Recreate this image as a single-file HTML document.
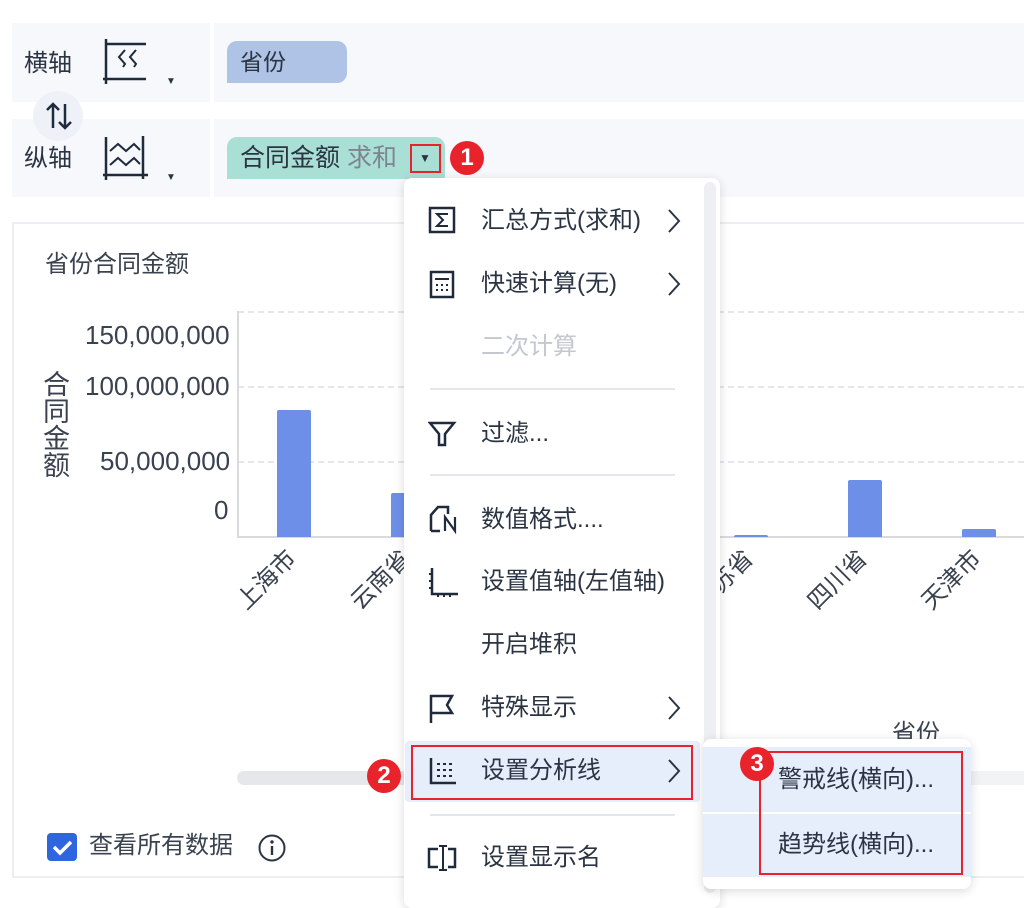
<!DOCTYPE html>
<html><head><meta charset="utf-8"><style>
*{margin:0;padding:0;box-sizing:border-box}
body{width:1024px;height:893px;overflow:hidden;background:#fff;font-family:"Liberation Sans","Noto Sans CJK SC",sans-serif;color:#2b3443;position:relative}
.abs{position:absolute}
.t{position:absolute;white-space:nowrap;line-height:1}
.mi{position:absolute;left:481px;font-size:24px;white-space:nowrap;line-height:1;color:#2b3443}
.arr{position:absolute;left:667px}
.sep{position:absolute;left:430px;width:245px;height:2px;background:#e3e6ec}
.badge{position:absolute;width:34px;height:34px;border-radius:50%;background:#e8232b;color:#fff;font-size:24px;font-weight:bold;text-align:center;line-height:34px}
.dash{position:absolute;left:238px;width:786px;border-top:2px dashed #e6e7ea}
.bar{position:absolute;background:#6d8fe8;border-radius:2px 2px 0 0}
.xl{position:absolute;font-size:24px;color:#3a4250;transform-origin:right center;transform:rotate(-45deg);white-space:nowrap;text-align:right;width:100px}
</style></head><body>
<div class="abs" style="left:12px;top:23px;width:1012px;height:79px;background:#f6f8fc"></div>
<div class="abs" style="left:12px;top:119px;width:1012px;height:78px;background:#f6f8fc"></div>
<div class="abs" style="left:210px;top:23px;width:4px;height:174px;background:#fff"></div>
<div class="t" style="left:24px;top:52px;font-size:24px">横轴</div>
<div class="t" style="left:24px;top:147px;font-size:24px">纵轴</div>
<svg class="abs" style="left:100px;top:38px" width="50" height="48" viewBox="0 0 50 48" fill="none" stroke="#1f2a3d" stroke-width="2.5">
<path d="M6 1V46M3 41H46M6 6H46"/><path d="M25 12L19 19L25 26L23 29M36 12L30 19L36 26L34 29" stroke-width="2"/></svg>
<svg class="abs" style="left:100px;top:134px" width="50" height="48" viewBox="0 0 50 48" fill="none" stroke="#1f2a3d" stroke-width="2.5">
<path d="M6 3V46M3 41H48M43 2V45"/><path d="M10 17L18 10L26 17L34 10L40 16M10 31L18 24L26 31L34 24L40 30" stroke-width="2"/></svg>
<div class="t" style="left:166px;top:77px;font-size:10px">▼</div>
<div class="t" style="left:166px;top:173px;font-size:10px">▼</div>
<div class="abs" style="left:33px;top:91px;width:50px;height:50px;border-radius:50%;background:#eef1f8"></div>
<svg class="abs" style="left:44px;top:101px" width="30" height="30" fill="none" stroke="#1f2a3d" stroke-width="2.5"><path d="M9 27V3M3 9L9 3L15 9M21 3V27M15 21L21 27L27 21"/></svg>
<div class="abs" style="left:227px;top:41px;width:120px;height:42px;background:#aec3e6;border-radius:10px 10px 10px 0"></div>
<div class="t" style="left:240px;top:51px;font-size:23px">省份</div>
<div class="abs" style="left:227px;top:137px;width:218px;height:42px;background:#a9dfd5;border-radius:10px 10px 0 0"></div>
<div class="t" style="left:240px;top:146px;font-size:25px">合同金额 <span style="color:#7c8591">求和</span></div>
<div class="abs" style="left:410px;top:144px;width:31px;height:29px;border:2px solid #e8232b"></div>
<div class="t" style="left:419px;top:152px;font-size:12px">▼</div>
<div class="badge" style="left:450px;top:141px">1</div>
<div class="abs" style="left:12px;top:222px;width:1012px;height:656px;border:2px solid #eceef3;border-right:none"></div>
<div class="t" style="left:45px;top:253px;font-size:24px;color:#3a4250">省份合同金额</div>
<div class="t" style="left:43px;top:372px;font-size:27px;width:30px;line-height:27px;white-space:normal;color:#3a4250">合同金额</div>
<div class="t" style="left:85px;top:322px;font-size:26px;color:#3a4250">150,000,000</div>
<div class="t" style="left:85px;top:373px;font-size:26px;color:#3a4250">100,000,000</div>
<div class="t" style="left:100px;top:448px;font-size:26px;color:#3a4250">50,000,000</div>
<div class="t" style="left:214px;top:497px;font-size:26px;color:#3a4250">0</div>
<div class="dash" style="top:311px"></div>
<div class="dash" style="top:386px"></div>
<div class="dash" style="top:461px"></div>
<div class="abs" style="left:237px;top:311px;width:2px;height:227px;background:#d8dade"></div>
<div class="abs" style="left:237px;top:536px;width:787px;height:2px;background:#d8dade"></div>
<div class="bar" style="left:277px;top:410px;width:34px;height:127px"></div>
<div class="bar" style="left:391px;top:493px;width:34px;height:44px"></div>
<div class="bar" style="left:734px;top:535px;width:34px;height:2px"></div>
<div class="bar" style="left:848px;top:480px;width:34px;height:57px"></div>
<div class="bar" style="left:962px;top:529px;width:34px;height:8px"></div>
<div class="xl" style="left:190px;top:535px">上海市</div>
<div class="xl" style="left:304px;top:535px">云南省</div>
<div class="xl" style="left:647px;top:535px">江苏省</div>
<div class="xl" style="left:761px;top:535px">四川省</div>
<div class="xl" style="left:875px;top:535px">天津市</div>
<div class="t" style="left:892px;top:722px;font-size:24px;color:#3a4250">省份</div>
<div class="abs" style="left:237px;top:771px;width:200px;height:14px;border-radius:7px;background:#e5e7eb"></div>
<div class="abs" style="left:720px;top:771px;width:304px;height:14px;background:#f2f3f5"></div>
<div class="abs" style="left:47px;top:833px;width:30px;height:28px;border-radius:4px;background:#2f66e0"></div>
<svg class="abs" style="left:47px;top:833px" width="30" height="28"><path d="M7 14L13 20L24 9" stroke="#fff" stroke-width="3.5" fill="none"/></svg>
<div class="t" style="left:89px;top:834px;font-size:24px;color:#3a4250">查看所有数据</div>
<svg class="abs" style="left:257px;top:833px" width="30" height="30"><circle cx="15" cy="15" r="12.5" stroke="#2b3443" stroke-width="2" fill="none"/><circle cx="15" cy="9" r="1.7" fill="#2b3443"/><path d="M15 13V22" stroke="#2b3443" stroke-width="2.4"/></svg>
<div class="abs" style="left:404px;top:178px;width:316px;height:730px;background:#fff;border-radius:8px;box-shadow:0 2px 10px rgba(0,0,0,.15)"></div>
<div class="abs" style="left:704px;top:182px;width:12px;height:711px;background:#eeeff3;border-radius:6px"></div>
<svg class="abs" style="left:428px;top:205px" width="30" height="30" fill="none" stroke="#1f2a3d" stroke-width="2.5"><rect x="2" y="3" width="24" height="24"/><path d="M20 9H9L15 15L9 21H20" stroke-width="2"/></svg>
<div class="mi" style="top:209px">汇总方式(求和)</div>
<svg class="arr" style="top:208px" width="14" height="26"><path d="M2 2L12 13L2 24" stroke="#2b3443" stroke-width="2" fill="none"/></svg>
<svg class="abs" style="left:428px;top:270px" width="30" height="30" fill="none" stroke="#1f2a3d" stroke-width="2.5"><rect x="3" y="2" width="22" height="25"/><path d="M7 9H21" stroke-width="2"/><path d="M8 15h2M13 15h2M18 15h2M8 20h2M13 20h2M18 20h2" stroke-width="2"/></svg>
<div class="mi" style="top:272px">快速计算(无)</div>
<svg class="arr" style="top:271px" width="14" height="26"><path d="M2 2L12 13L2 24" stroke="#2b3443" stroke-width="2" fill="none"/></svg>
<div class="mi" style="top:335px;color:#c3c7cf">二次计算</div>
<div class="sep" style="top:388px"></div>
<svg class="abs" style="left:428px;top:419px" width="30" height="30" fill="none" stroke="#1f2a3d" stroke-width="2.5"><path d="M2 4H26L17 15V26H11V15Z"/></svg>
<div class="mi" style="top:422px">过滤...</div>
<div class="sep" style="top:474px"></div>
<svg class="abs" style="left:428px;top:504px" width="32" height="30" fill="none" stroke="#1f2a3d" stroke-width="2.5"><path d="M3 27V11L10 3H20V10M3 27H12"/><path d="M17 27V13L27 27V13" stroke-width="2.2"/></svg>
<div class="mi" style="top:508px">数值格式....</div>
<svg class="abs" style="left:428px;top:566px" width="32" height="32" fill="none" stroke="#1f2a3d" stroke-width="2.5"><path d="M4 2V28H30"/><path d="M1 8H4M1 15H4M1 22H4M10 28v3M16 28v3M22 28v3" stroke-width="2"/></svg>
<div class="mi" style="top:570px">设置值轴(左值轴)</div>
<div class="mi" style="top:633px">开启堆积</div>
<svg class="abs" style="left:428px;top:693px" width="30" height="32" fill="none" stroke="#1f2a3d" stroke-width="2.5"><path d="M3 30V3H24L19 12L24 20H3"/></svg>
<div class="mi" style="top:696px">特殊显示</div>
<svg class="arr" style="top:695px" width="14" height="26"><path d="M2 2L12 13L2 24" stroke="#2b3443" stroke-width="2" fill="none"/></svg>
<div class="abs" style="left:405px;top:741px;width:295px;height:61px;background:#e6eefc;border-radius:4px"></div>
<div class="abs" style="left:411px;top:745px;width:282px;height:55px;border:2px solid #e8232b"></div>
<svg class="abs" style="left:428px;top:756px" width="30" height="30" fill="none" stroke="#1f2a3d" stroke-width="2.5"><path d="M3 2V27H28"/><path d="M9 8h3M15 8h3M21 8h3M9 14h3M15 14h3M21 14h3M9 20h3M15 20h3M21 20h3" stroke-width="2"/></svg>
<div class="mi" style="top:759px">设置分析线</div>
<svg class="arr" style="top:758px" width="14" height="26"><path d="M2 2L12 13L2 24" stroke="#2b3443" stroke-width="2" fill="none"/></svg>
<div class="badge" style="left:367px;top:759px">2</div>
<div class="sep" style="top:814px"></div>
<svg class="abs" style="left:426px;top:843px" width="34" height="30" fill="none" stroke="#1f2a3d" stroke-width="2.5"><path d="M12 6H3V24H12M22 6H29V24H22"/><path d="M17 3V27M13 3H21M13 27H21" stroke-width="2"/></svg>
<div class="mi" style="top:846px">设置显示名</div>
<div class="abs" style="left:703px;top:739px;width:268px;height:150px;background:#fff;border-radius:8px;box-shadow:0 2px 10px rgba(0,0,0,.15)"></div>
<div class="abs" style="left:703px;top:747px;width:268px;height:65px;background:#e6eefc"></div>
<div class="abs" style="left:703px;top:814px;width:268px;height:63px;background:#e6eefc"></div>
<div class="abs" style="left:759px;top:751px;width:204px;height:124px;border:2px solid #e8232b"></div>
<div class="t" style="left:778px;top:768px;font-size:24px">警戒线(横向)...</div>
<div class="t" style="left:778px;top:833px;font-size:24px">趋势线(横向)...</div>
<div class="badge" style="left:740px;top:747px">3</div>
</body></html>
